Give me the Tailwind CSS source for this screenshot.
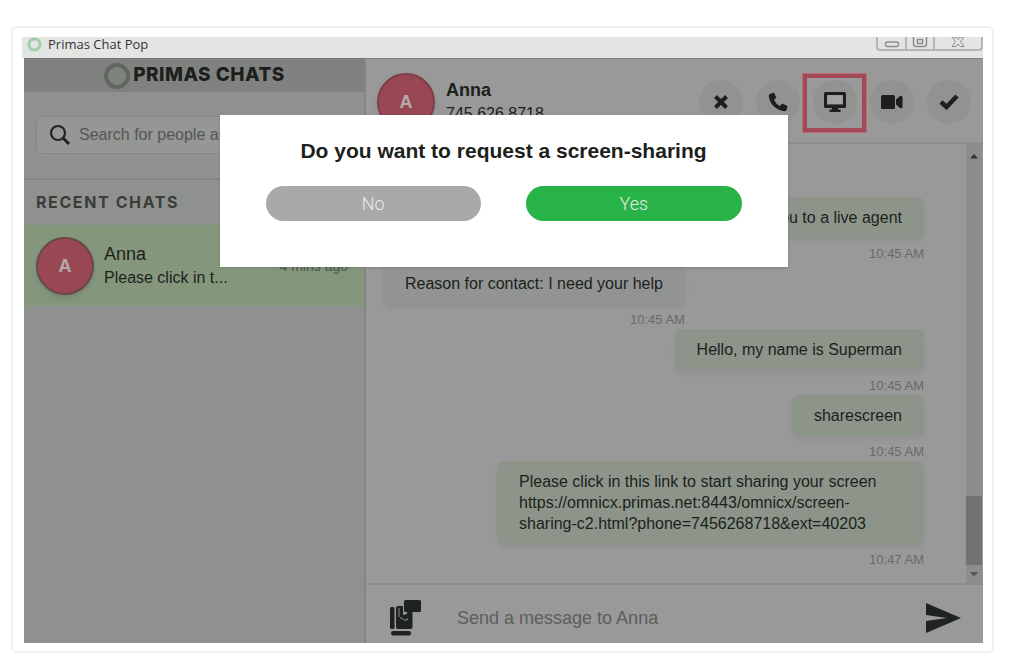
<!DOCTYPE html>
<html lang="en">
<head>
  <meta charset="UTF-8">
  <meta name="viewport" content="width=device-width, initial-scale=1.0">
  <title>Primas Chat Pop</title>
  <script src="https://cdn.jsdelivr.net/npm/@tailwindcss/browser@4"></script>
</head>
<body class="h-screen overflow-hidden bg-white pt-[26px] pr-[30px] pb-[18px] pl-[11px] font-['Liberation_Sans',sans-serif] text-[#1c1f1c]">
  <div class="flex h-full flex-col rounded-md border-2 border-[#f0f1f0] bg-white pt-[9px] pr-[9px] pb-2 pl-[9px]">

    <!-- title bar -->
    <div class="flex h-[21px] shrink-0 items-start justify-between bg-[#e3e5e3] pl-[5px]">
      <div class="flex items-center gap-1.5 font-['Open_Sans',sans-serif] text-[13px] leading-[15px] text-[#333]">
        <svg class="size-[15px]" viewBox="0 0 15 15" fill="none" aria-hidden="true">
          <circle cx="7.5" cy="7.5" r="5.5" stroke="#9fceaa" stroke-width="3"/>
        </svg>
        <span>Primas Chat Pop</span>
      </div>
      <div class="flex text-[#8d8f8d]">
        <button aria-label="Minimize" class="flex h-[14px] w-[29px] items-end justify-center rounded-bl border-b-2 border-l-2 border-[#b4b6b4]">
          <svg class="h-3 w-4" viewBox="0 0 16 12" fill="none" stroke="currentColor" stroke-width="1.5"><rect x="1.5" y="5" width="13" height="4.5" rx="2"/></svg>
        </button>
        <button aria-label="Maximize" class="flex h-[14px] w-[28px] items-end justify-center border-b-2 border-l-2 border-[#b4b6b4]">
          <svg class="h-3 w-4" viewBox="0 0 16 12" fill="none" stroke="currentColor" stroke-width="1.5"><path d="M1.500 0v7q0 2.500 2.500 2.500h8q2.500 0 2.500-2.500V0"/><rect x="5.5" y="2.5" width="5" height="4"/></svg>
        </button>
        <button aria-label="Close" class="flex h-[14px] w-[50px] items-end justify-center rounded-br border-x-2 border-b-2 border-[#b4b6b4]">
          <svg class="h-3 w-4" viewBox="0 0 16 12" fill="none" stroke="currentColor" stroke-linejoin="round"><path d="M2 0l3.500 4.500L2 9.500h4l2-2.500 2 2.500h4l-3.500-5L14 0h-4L8 2.500 6 0z"/></svg>
        </button>
      </div>
    </div>

    <div class="relative ml-[2px] flex min-h-0 flex-1">
      <!-- sidebar -->
      <aside class="flex w-[342px] shrink-0 flex-col border-r-2 border-[#848684] bg-[#8f918f]">
        <div class="flex h-[34px] items-center justify-center gap-0.5 border-t border-[#757775] bg-[#808280]">
          <svg class="size-7" viewBox="0 0 28 28" fill="none" aria-hidden="true">
            <circle cx="14" cy="14" r="11" stroke="#626562" stroke-width="4"/>
            <circle cx="14" cy="14" r="8" stroke="#71916f" stroke-width="1"/>
          </svg>
          <h1 class="font-['Inter',sans-serif] text-[19px] font-extrabold tracking-wide">PRIMAS CHATS</h1>
        </div>
        <div class="border-b-2 border-[#848684] px-3 py-6">
          <label class="flex h-[38px] items-center gap-2 rounded-md border border-[#868886] bg-[#959795] pl-3">
            <svg class="size-[22px] shrink-0" viewBox="0 0 22 22" fill="none" stroke="#222522" aria-hidden="true">
              <circle cx="9" cy="9" r="7" stroke-width="2.2"/><path d="M14 14l6 6" stroke-width="3"/>
            </svg>
            <input type="text" aria-label="Search" placeholder="Search for people and messages" class="w-full text-base placeholder:text-[#545654] outline-none">
          </label>
        </div>
        <h2 class="px-3 pt-2.5 pb-[11px] font-['Inter',sans-serif] text-base font-bold tracking-widest text-[#3a3d3a]">RECENT CHATS</h2>
        <a href="#" class="flex h-[81px] items-center gap-2.5 bg-[#84977c] pr-4 pl-3">
          <span class="flex size-[58px] shrink-0 items-center justify-center rounded-full border-2 border-[#6b474a] bg-[#994853] text-lg font-bold text-[#b3aaa9] shadow-md">A</span>
          <span>
            <span class="block text-lg leading-6">Anna</span>
            <span class="block text-base leading-6">Please click in t...</span>
          </span>
          <span class="ml-auto text-sm text-[#4c574a]">4 mins ago</span>
        </a>
      </aside>

      <!-- conversation -->
      <main class="flex min-w-0 flex-1 flex-col bg-[#999]">
        <header class="flex h-[86px] shrink-0 items-center justify-between border-t border-b-2 border-t-[#7f817f] border-b-[#8c8e8c] pt-0.5 pr-3 pl-[11px]">
          <div class="flex items-center gap-[11px]">
            <span class="flex size-[58px] items-center justify-center rounded-full border-2 border-[#7c4048] bg-[#994853] text-lg font-bold text-[#b3aaa9] shadow-md">A</span>
            <div>
              <p class="text-lg leading-6 font-bold">Anna</p>
              <p class="text-base leading-6">745.626.8718</p>
            </div>
          </div>
          <div class="flex gap-[13px]">
            <button aria-label="Close chat" class="flex size-11 items-center justify-center rounded-full bg-[#919391]">
              <svg class="size-4" viewBox="0 0 16 16" fill="none" stroke="currentColor" stroke-width="4"><path d="M2.500 2.500l11 11M13.500 2.500l-11 11"/></svg>
            </button>
            <button aria-label="Call" class="flex size-11 items-center justify-center rounded-full bg-[#919391]">
              <svg class="size-5" viewBox="0 0 20 20" fill="currentColor"><path d="M1.500 2.200 5 .8q1-.4 1.500.6L8 5q.4 1-.4 1.600L6 8q1.800 4 6 6l1.500-1.800q.6-.7 1.500-.3l3.700 1.600q1 .5.7 1.500l-1 3.300q-.3 1-1.400 1Q10.500 19 5.500 14 .8 9 .8 3.200q0-.8.7-1z"/></svg>
            </button>
            <div class="relative">
              <button aria-label="Share screen" class="flex size-11 items-center justify-center rounded-full bg-[#919391]">
                <svg class="h-5 w-6" viewBox="0 0 24 20" fill="currentColor"><path fill-rule="evenodd" d="M2.500 0h19q1.500 0 1.500 1.500v13q0 1.500-1.500 1.500H15v1.500h2.500V20h-11v-2.500H9V16H2.500Q1 16 1 14.500v-13Q1 0 2.500 0zM4 3v9.500h16V3z"/><path fill="#a2a4a2" d="M4.500 3.500h15V12h-15z"/></svg>
              </button>
              <span class="pointer-events-none absolute -top-[6px] -left-[10px] h-[58px] w-[63px] border-4 border-[#a04957] outline outline-[#c06a75]"></span>
            </div>
            <button aria-label="Video call" class="flex size-11 items-center justify-center rounded-full bg-[#919391]">
              <svg class="h-4 w-[22px]" viewBox="0 0 22 16" fill="currentColor"><rect y="1" width="14" height="14" rx="1.5"/><path d="M15 5.500l4-3.500q2.500-1 2.500 1.500v9q0 2.500-2.500 1.500l-4-3.500z"/></svg>
            </button>
            <button aria-label="Resolve" class="flex size-11 items-center justify-center rounded-full bg-[#919391]">
              <svg class="h-4 w-5" viewBox="0 0 20 16" fill="none" stroke="currentColor" stroke-width="4.5"><path d="M2 8l5.500 5L18 2"/></svg>
            </button>
          </div>
        </header>

        <div class="flex min-h-0 flex-1">
          <div class="flex min-w-0 flex-1 flex-col justify-end overflow-hidden pr-[42px] pb-3.5 pl-[17px] text-base leading-[21px]">
            <div class="flex flex-col items-end">
              <p class="rounded-md bg-[#8d958a] px-[22px] py-2.5 shadow-md shadow-black/5">Please wait while I connect you to a live agent</p>
              <time class="pt-1.5 text-[13px] leading-[19px] text-[#686a68]">10:45 AM</time>
            </div>
            <div class="flex flex-col items-end self-start">
              <p class="rounded-md bg-[#919492] px-[22px] py-2.5 shadow-md shadow-black/5">Reason for contact: I need your help</p>
              <time class="pt-1.5 text-[13px] leading-[19px] text-[#686a68]">10:45 AM</time>
            </div>
            <div class="flex flex-col items-end">
              <p class="rounded-md bg-[#8d958a] px-[22px] py-2.5 shadow-md shadow-black/5">Hello, my name is Superman</p>
              <time class="pt-1.5 text-[13px] leading-[19px] text-[#686a68]">10:45 AM</time>
            </div>
            <div class="flex flex-col items-end">
              <p class="rounded-md bg-[#8d958a] px-[22px] py-2.5 shadow-md shadow-black/5">sharescreen</p>
              <time class="pt-1.5 text-[13px] leading-[19px] text-[#686a68]">10:45 AM</time>
            </div>
            <div class="flex flex-col items-end">
              <p class="w-[427px] rounded-md bg-[#8d958a] px-[22px] py-2.5 shadow-md shadow-black/5">Please click in this link to start sharing your screen<br>https://omnicx.primas.net:8443/omnicx/screen-<br>sharing-c2.html?phone=7456268718&amp;ext=40203</p>
              <time class="pt-1.5 text-[13px] leading-[19px] text-[#686a68]">10:47 AM</time>
            </div>
          </div>
          <!-- scrollbar -->
          <div class="mr-[1px] flex w-4 flex-col items-center bg-[#8c8e8c]">
            <svg class="mt-2 h-2 w-2.5" viewBox="0 0 10 8" fill="#333633" aria-hidden="true"><path d="M1 6.500 5 2l4 4.500z"/></svg>
            <div class="mt-auto h-[69px] w-full bg-[#717371]"></div>
            <svg class="my-[5px] h-2 w-2.5" viewBox="0 0 10 8" fill="#525452" aria-hidden="true"><path d="M1 2 5 6.500 9 2z"/></svg>
          </div>
        </div>

        <footer class="flex h-[60px] shrink-0 items-center border-t-2 border-[#8c8e8c] pt-2 pr-[22px] pl-6">
          <button aria-label="Canned replies">
            <svg class="h-9 w-8" viewBox="0 0 32 36" fill="#1f231f">
              <rect x="0" y="7" width="4.5" height="22" rx="1.5"/>
              <path d="M6 8q0-2 2-2h5v9l4-1v-2h5.500v15q0 2-2 2H8q-2 0-2-2z"/>
              <rect x="14" y="0" width="17" height="12" rx="1.5"/>
              <rect x="1" y="31" width="20" height="4.5" rx="2"/>
              <path d="M9 8v9M10 18h2l2 2h3l1-2" fill="none" stroke="#898b89" stroke-width="1"/>
            </svg>
          </button>
          <input type="text" aria-label="Message" placeholder="Send a message to Anna" class="ml-[35px] min-w-0 flex-1 text-lg placeholder:text-[#5c5e5c] outline-none">
          <button aria-label="Send">
            <svg class="h-[30px] w-[35px]" viewBox="0 0 35 30" fill="#1f231f"><path d="M0 0l35 15L0 30V18l21-3L0 12z"/></svg>
          </button>
        </footer>
      </main>

      <!-- screen-sharing dialog -->
      <div role="dialog" aria-labelledby="dialog-title" class="absolute top-[57px] left-1/2 w-[568px] -translate-x-1/2 bg-white px-[46px] pt-[21px] pb-[46px] shadow-sm">
        <h2 id="dialog-title" class="text-center text-[21px] leading-[30px] font-bold">Do you want to request a screen-sharing</h2>
        <div class="mt-5 flex gap-[45px] font-['Roboto',sans-serif] text-lg font-light text-[#e8eae8]">
          <button class="h-[35px] flex-1 rounded-full bg-[#a9a9a9]">No</button>
          <button class="h-[35px] flex-1 rounded-full bg-[#27b347]">Yes</button>
        </div>
      </div>
    </div>
  </div>
</body>
</html>
